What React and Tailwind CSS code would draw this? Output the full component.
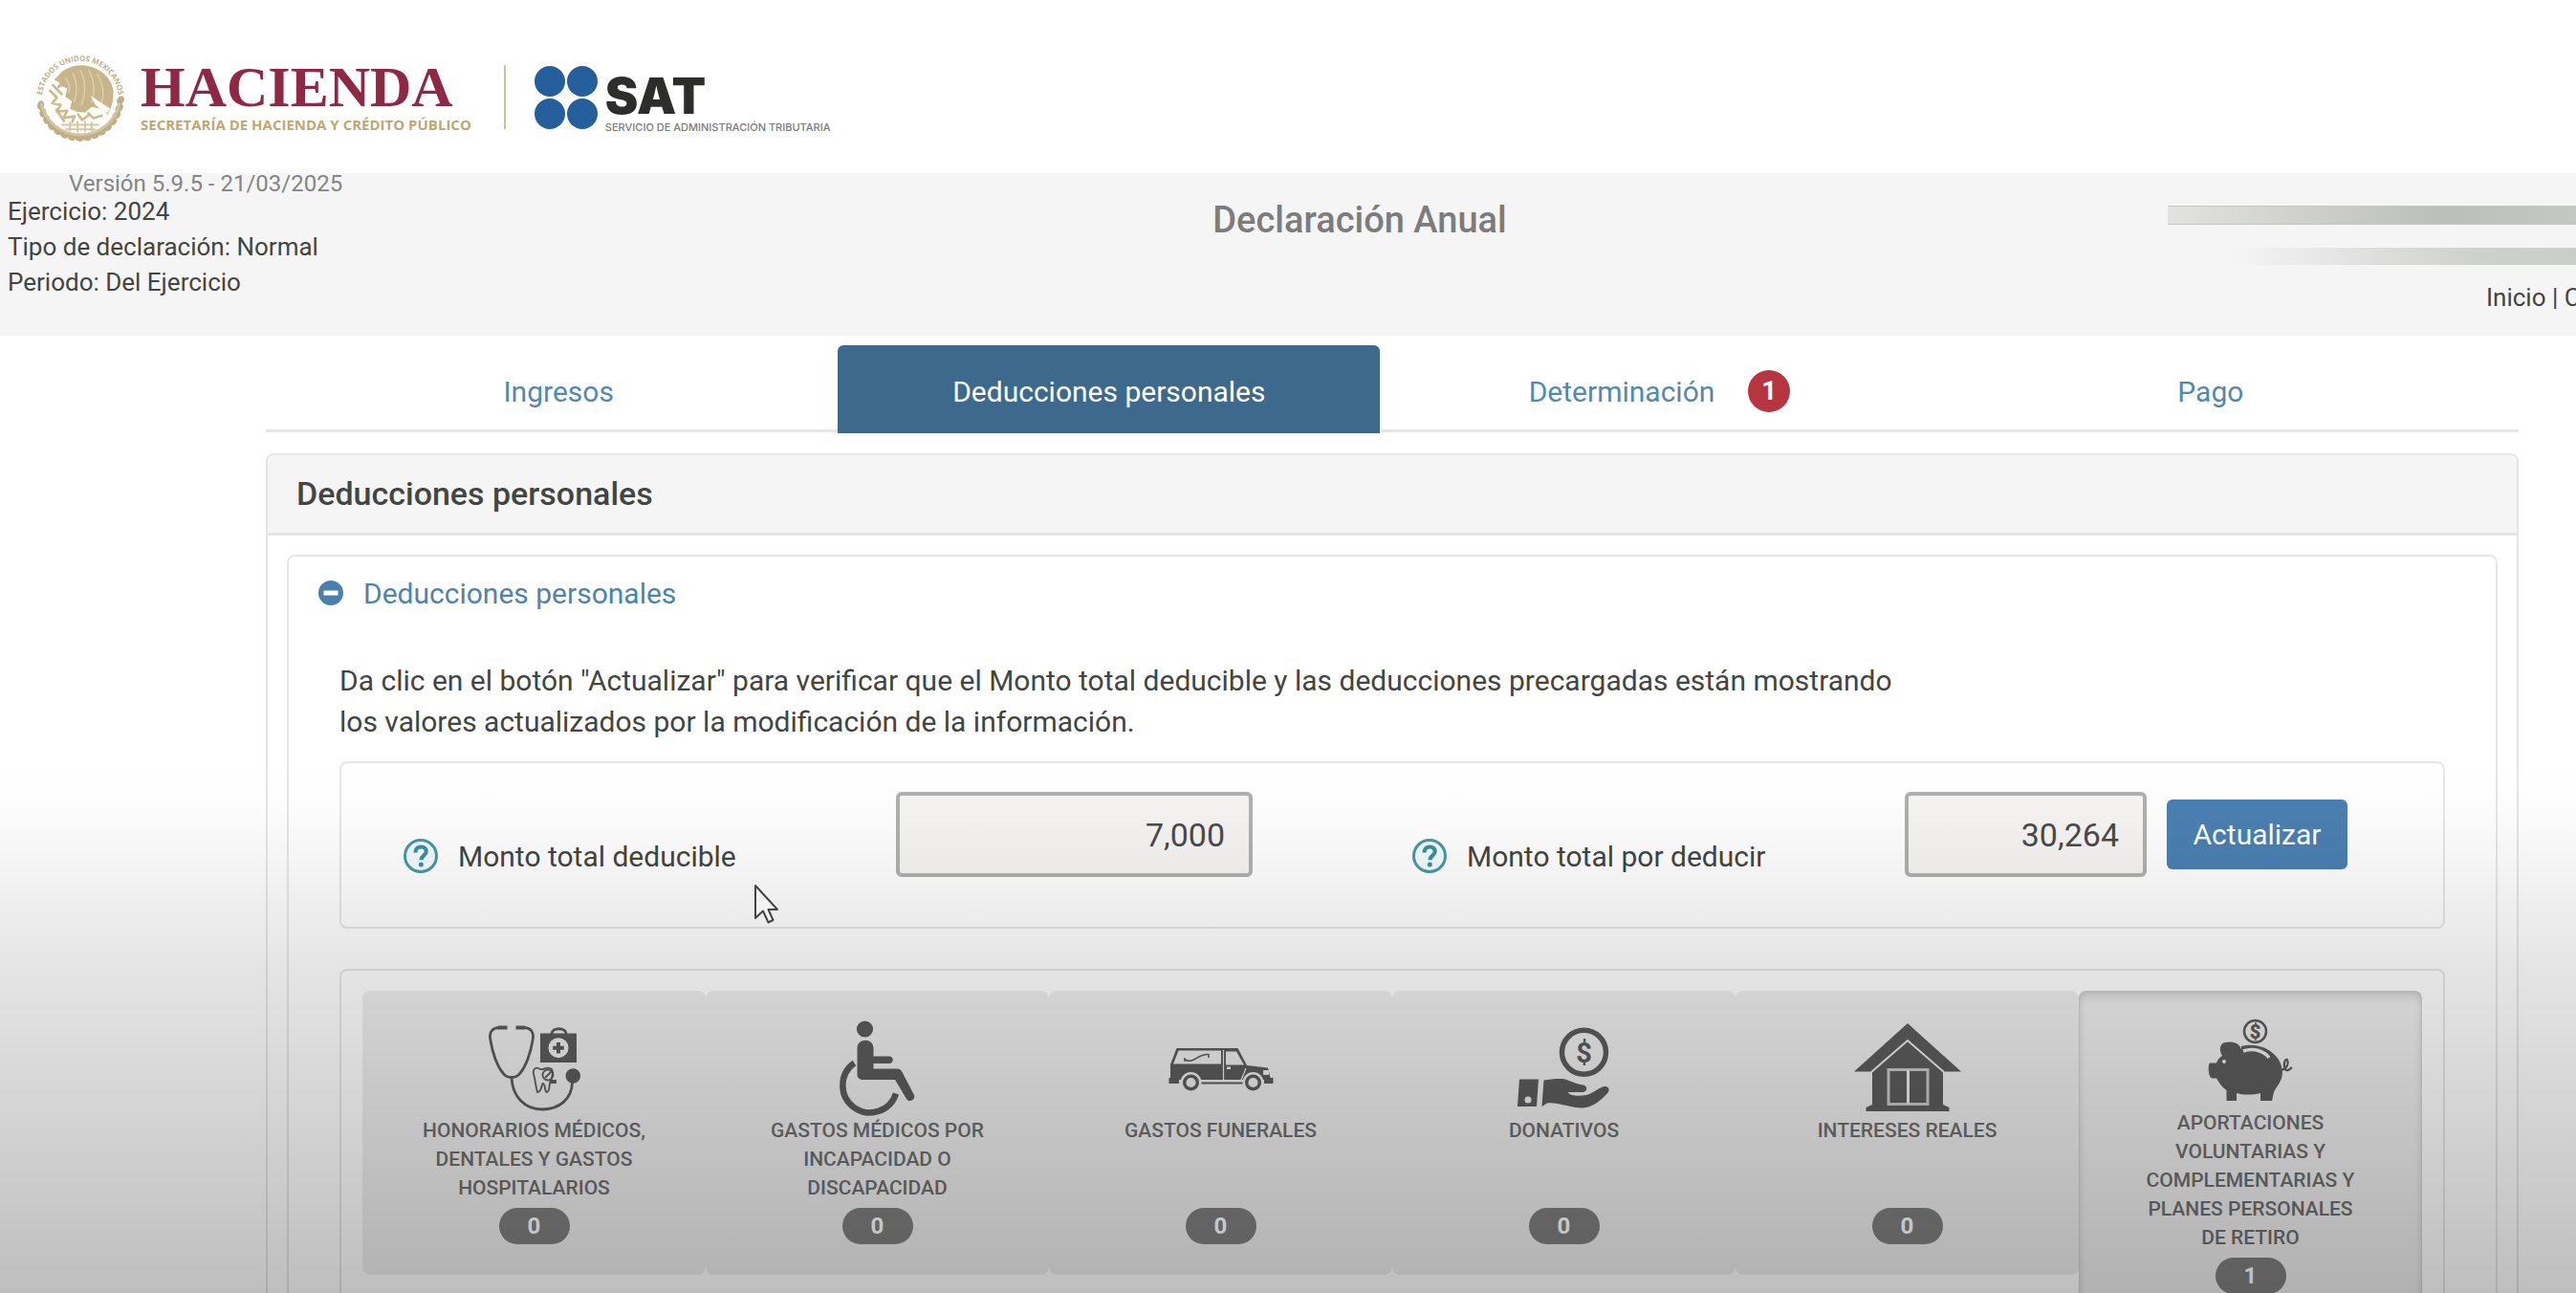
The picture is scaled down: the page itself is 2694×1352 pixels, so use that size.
import React from "react";

const INK = "#5c5c5c";
const PAPER = "#eeeeee";

function Seal() {
  const leaves = [];
  for (let a = 4; a <= 176; a += 11) leaves.push(a);
  return (
    <svg viewBox="0 0 100 100" className="size-[98px] shrink-0" aria-hidden="true">
      <defs>
        <path id="ring" d="M9 52A41 41 0 0 1 91 52" />
      </defs>
      <text fontFamily="Open Sans, sans-serif" fontWeight="700" fontSize="8" fill="#c2ae84">
        <textPath href="#ring" startOffset="50%" textAnchor="middle">
          ESTADOS UNIDOS MEXICANOS
        </textPath>
      </text>
      <g fill="#c2ae84">
        {leaves.map((a) => (
          <ellipse key={a} cx="93" cy="50" rx="3.6" ry="5" transform={`rotate(${a} 50 50) rotate(24 93 50)`} />
        ))}
      </g>
      <path d="M8 56A43 43 0 0 0 92 56" fill="none" stroke="#d3c4a1" strokeWidth="3" />
      <circle cx="50" cy="50" r="37" fill="#fdfcf9" />
      <path
        d="M26 27C33 18 45 14 56 16 70 18 82 27 85 41 86 51 84 60 79 68L72 62 62 60 55 66 46 65 39 62 41 54 34 49 36 40 30 38 24 42 28 34 22 31Z"
        fill="#c8b58c"
      />
      <path
        d="M42 24C47 34 47 46 43 55M50 21C56 32 56 46 51 58M59 21C65 31 66 44 62 55M68 25C74 35 76 45 73 55M34 29C38 34 39 40 38 45"
        fill="none"
        stroke="#e0d4b8"
        strokeWidth="1.2"
      />
      <path d="M61 48L82 62 78 67 66 58Z" fill="#fbf9f4" />
      <path
        d="M17 42L25 50 20 56 29 58 25 65 36 64 32 72 44 70 41 77M20 36L31 47M58 66L64 72 74 69M24 62L33 76M47 67L52 74 60 68"
        fill="none"
        stroke="#cbb98f"
        strokeWidth="2.6"
        strokeLinejoin="round"
      />
      <path d="M30 79H70M34 84H66M39 76V86M47 75V87M55 75V87M62 76V86" stroke="#d5c7a6" strokeWidth="2" />
    </svg>
  );
}

function SatDots() {
  return (
    <svg viewBox="0 0 66 66" className="size-[66px] shrink-0" fill="#245f9c" aria-hidden="true">
      <circle cx="16" cy="16" r="16" />
      <circle cx="50" cy="16" r="16" />
      <circle cx="16" cy="50" r="16" />
      <circle cx="50" cy="50" r="16" />
    </svg>
  );
}

function HelpIcon() {
  return (
    <svg viewBox="0 0 38 38" className="size-[38px] shrink-0" aria-hidden="true">
      <circle cx="19" cy="19" r="16.5" fill="#f2fbfd" stroke="#4798aa" strokeWidth="3" />
      <path
        d="M13.5 15.5C13.5 11.5 16 9.5 19.3 9.5 22.6 9.5 24.7 11.6 24.7 14.4 24.7 18.5 19.4 18.8 19.4 23.3"
        fill="none"
        stroke="#3c8fa3"
        strokeWidth="4.2"
      />
      <circle cx="19.3" cy="28" r="2.5" fill="#3c8fa3" />
    </svg>
  );
}

function MinusIcon() {
  return (
    <svg viewBox="0 0 26 26" className="size-[26px] shrink-0" aria-hidden="true">
      <circle cx="13" cy="13" r="13" fill="#4a80ae" />
      <rect x="5.5" y="10.5" width="15" height="5" fill="#fff" />
    </svg>
  );
}

function MedicalIcon() {
  return (
    <>
      <g fill="none" stroke={INK} strokeWidth="2.8">
        <path d="M24 7.5C14 7.5 12.5 14 14 21 16 34 21 48 27 55 31 61 41 61 45 55 51 48 56 34 58 21 59.5 14 58 7.5 48 7.5" />
        <path d="M36 60C37 80 50 93 68 93S99 82 99.5 65" />
        <path d="M78 14C78 7 93 7 93 14" />
      </g>
      <path d="M22 5.5H31.5V9.5H22ZM40.5 5.5H50V9.5H40.5Z" fill={INK} />
      <rect x="66" y="13.5" width="38" height="30.5" fill={INK} />
      <circle cx="85" cy="28.7" r="10.5" fill={PAPER} />
      <path d="M85 23V34.5M79.2 28.7H90.8" stroke={INK} strokeWidth="4" />
      <circle cx="100.3" cy="58" r="7.8" fill={INK} />
      <g fill="none" stroke={INK} strokeWidth="1.8">
        <path d="M63 75C61 68 61 63 59.5 58 57 50 62 48 66 51 70 52 73 47 78 51 81 55 77 61 76 66 75 70 76 74 73 75 70 75 72 67 69 66 67 66 68 75 63 75Z" />
        <circle cx="74" cy="57" r="5.5" />
        <path d="M71 60L78 53M77 63H82V65H76" />
      </g>
    </>
  );
}

function WheelchairIcon() {
  return (
    <>
      <circle cx="46.5" cy="9" r="8.6" fill={INK} />
      <path
        d="M38.5 29C38.5 18 55.5 18 55.5 29V37.5H72C77 37.5 77 45 72 45H55.5V50.5H80C83 50.5 84.5 52 85.5 54L98 78C100 83 92.5 86.5 90 82L78 62H45C41 62 38.5 60 38.5 56Z"
        fill={INK}
      />
      <path d="M35.500 44.500A28.500 28.500 0 1 0 79 76.500" fill="none" stroke={INK} strokeWidth="6.500" />
    </>
  );
}

function HearseIcon() {
  return (
    <>
      <path d="M13.5 29H77.5L87 47 109 49.5 112 62H7V46Z" fill={INK} />
      <path d="M15.5 31.5H60V45.5H10Z" fill={PAPER} />
      <path d="M65 32.5H76L84 46.5 80 46.5H65Z" fill={PAPER} />
      <path d="M22 41C32 46 36 34 47 35.5M47 35V39M22 39V43" fill="none" stroke={INK} strokeWidth="1.5" />
      <path d="M62.5 31V65M65 65H80L86 50" fill="none" stroke={PAPER} strokeWidth="1.2" />
      <rect x="66" y="48.5" width="4" height="2.5" fill={PAPER} />
      <rect x="104" y="52" width="6" height="5" rx="1" fill={PAPER} />
      <path d="M5.5 60H16V66H5.5ZM105 60H114.5V66H105Z" fill={INK} />
      <path d="M36 65.5H86" stroke={INK} strokeWidth="2" />
      <circle cx="28.5" cy="65" r="11" fill={PAPER} />
      <circle cx="93.5" cy="65" r="11" fill={PAPER} />
      <circle cx="28.5" cy="65" r="6.8" fill={PAPER} stroke={INK} strokeWidth="3.4" />
      <circle cx="93.5" cy="65" r="6.8" fill={PAPER} stroke={INK} strokeWidth="3.4" />
    </>
  );
}

function DonationIcon() {
  return (
    <>
      <circle cx="80.5" cy="33.3" r="23" fill="none" stroke={INK} strokeWidth="5.5" />
      <text x="80.5" y="44" textAnchor="middle" fontFamily="Roboto, sans-serif" fontWeight="700" fontSize="29" fill={INK}>
        $
      </text>
      <path d="M13 61.5H33L31 90H11Z" fill={INK} />
      <circle cx="22" cy="83" r="3.5" fill={PAPER} />
      <path
        d="M38.5 62.5C46 61.5 54 60.5 61 61.5 68 64 74 67 80 67.5 85 69 84 75 79 75H64C65 79 76 79.5 83 78 90 76 94 72 100 69.5 105 68 108 71 106 75 99 83 91 90 80 91.5 68 92 52 85 42 86.5L36.5 90Z"
        fill={INK}
      />
    </>
  );
}

function HouseIcon() {
  return (
    <>
      <path d="M60 3L116 53.5H97V88L103.5 91V95H16.5V91L23 88V53.5H4Z" fill={INK} />
      <path d="M22 54L60 21 98 54" fill="none" stroke={PAPER} strokeWidth="2" />
      <rect x="40" y="51.5" width="41" height="36" fill="none" stroke="#c9c9c9" strokeWidth="3" />
      <path d="M60.5 52V87" stroke={PAPER} strokeWidth="3" />
    </>
  );
}

function PiggyIcon() {
  return (
    <>
      <circle cx="64.5" cy="11.5" r="11.5" fill="none" stroke={INK} strokeWidth="2.5" />
      <text x="64.5" y="18.5" textAnchor="middle" fontFamily="Roboto, sans-serif" fontWeight="900" fontSize="20" fill={INK}>
        $
      </text>
      <path
        d="M50 27C70 22 92 34 93 54 93 64 86 70 84 75L82 84H70V76C62 78 52 78 45 76V84H34.5V73C29 69 27 65 24 60.5H19C15 58 15 46 17 44.5H24C25 41 27 39 30 37 26 30 28 24 33 23 42 21 48 24 50 30Z"
        fill={INK}
      />
      <path d="M52 32C64 28 75 33 79 39" fill="none" stroke={PAPER} strokeWidth="3.5" />
      <circle cx="32" cy="43" r="2" fill={PAPER} />
      <path d="M92 52C98 50 100 45 98 41 94 40 94 50 97 52 99 53 101 51 103 49" fill="none" stroke={INK} strokeWidth="2.2" />
    </>
  );
}

const cards = [
  { label: "Honorarios médicos, dentales y gastos hospitalarios", count: 0, Icon: MedicalIcon },
  { label: "Gastos médicos por incapacidad o discapacidad", count: 0, Icon: WheelchairIcon },
  { label: "Gastos funerales", count: 0, Icon: HearseIcon },
  { label: "Donativos", count: 0, Icon: DonationIcon },
  { label: "Intereses reales", count: 0, Icon: HouseIcon },
  { label: "Aportaciones voluntarias y complementarias y planes personales de retiro", count: 1, Icon: PiggyIcon, active: true },
];

function Card({ label, count, Icon, active }) {
  return (
    <button
      type="button"
      className={
        active
          ? "flex flex-col items-center rounded-lg bg-[#eeeeee] px-16 pt-[31px] pb-8 shadow-[inset_0_6px_10px_rgba(0,0,0,0.12),inset_0_0_4px_rgba(0,0,0,0.12)]"
          : "flex flex-col items-center self-start rounded-lg bg-[#eeeeee] px-12 pt-[31px] pb-8"
      }
    >
      <svg viewBox={active ? "0 0 120 92" : "0 0 120 100"} className={active ? "h-[92px] w-[120px] shrink-0 overflow-visible" : "h-[100px] w-[120px] shrink-0"} aria-hidden="true">
        <Icon />
      </svg>
      <span className="min-h-[90px] text-[21px] leading-[30px] font-medium text-[#6e6e6e] uppercase">{label}</span>
      <span className="mt-1.5 flex h-[38px] w-[74px] items-center justify-center rounded-full bg-[#7f7f7f] text-2xl font-bold text-white">
        {count}
      </span>
    </button>
  );
}

function Amount({ id, label, value, width, gap }) {
  return (
    <div className={gap}>
      <label htmlFor={id} className="flex h-11 w-[516px] items-center gap-5">
        <HelpIcon />
        {label}
      </label>
      <input
        id={id}
        readOnly
        defaultValue={value}
        className={`${width} h-[89px] rounded-md border-4 border-[#b0b0af] bg-[#f6f5f3] pr-[25px] text-right text-[34px] text-[#4a4a4a]`}
      />
    </div>
  );
}

const tab = "flex h-[88px] flex-1 items-center justify-center pt-2 text-[#5289b0]";

export default function App() {
  return (
    <div className="relative h-screen overflow-hidden bg-white font-[Roboto,sans-serif] text-[30px] text-[#424540]">
      <header className="flex h-[181px] items-start pt-[53px] pl-[35px]">
        <Seal />
        <div className="ml-3.5 flex flex-col pt-2">
          <span className="font-['Liberation_Serif',serif] text-[60px] leading-[60px] font-bold text-[#8e2845]">HACIENDA</span>
          <span className="font-['Open_Sans',sans-serif] text-[15px] leading-[18px] font-bold text-[#c0a672]">
            SECRETARÍA DE HACIENDA Y CRÉDITO PÚBLICO
          </span>
        </div>
        <div className="mt-[15px] ml-[34px] h-[67px] w-0.5 bg-[#d1c094]" />
        <div className="mt-4 ml-[30px]">
          <SatDots />
        </div>
        <div className="ml-2 flex flex-col pt-6">
          <span className="font-[Inter,sans-serif] text-[52px] leading-[48px] font-black text-[#2d2d2b]">SAT</span>
          <span className="font-[Inter,sans-serif] text-[11px] leading-4 font-medium text-[#7a7a7a]">SERVICIO DE ADMINISTRACIÓN TRIBUTARIA</span>
        </div>
      </header>

      <section className="grid h-[170px] w-[calc(100%+150px)] grid-cols-3 bg-[#f5f5f5] text-[26px]">
        <div className="pl-2">
          <p className="pl-16 text-2xl leading-[22px] text-[#858585]">Versión 5.9.5 - 21/03/2025</p>
          <p className="leading-[37px]">Ejercicio: 2024</p>
          <p className="leading-[37px]">Tipo de declaración: Normal</p>
          <p className="leading-[37px]">Periodo: Del Ejercicio</p>
        </div>
        <h1 className="pt-6 text-center text-[38px] leading-[50px] font-medium text-[#7c7c7c]">Declaración Anual</h1>
        <div className="flex flex-col items-end pt-[34px]">
          <div className="h-5 w-[577px] border-y border-[#c6c8c5] bg-linear-to-r from-[#e2e3e1] via-[#bcbebb] to-[#d0d2cf]" />
          <div className="mt-6 h-[18px] w-[514px] bg-linear-to-r from-[#f5f5f5] via-[#cfd1ce] to-[#c6c8c5]" />
          <nav className="mt-4 w-[244px] leading-[37px]">
            <a href="#inicio">Inicio</a> | <a href="#c">C</a>
          </nav>
        </div>
      </section>

      <main className="mr-[60px] ml-[278px]">
        <nav className="flex border-b-[3px] border-[#e6e6e6] pt-2.5 pr-[34px] pl-[18px]">
          <a href="#ingresos" className={tab}>Ingresos</a>
          <a href="#deducciones" className="mx-1 -mb-1 flex h-[92px] w-[567px] items-center justify-center rounded-t-md bg-[#3d698d] pt-1 text-white">
            Deducciones personales
          </a>
          <a href="#determinacion" className={tab}>
            Determinación
            <span className="ml-[35px] flex size-11 items-center justify-center rounded-full bg-[#b73540] text-[28px] font-bold text-white">1</span>
          </a>
          <a href="#pago" className={tab}>Pago</a>
        </nav>

        <section className="mt-[22px] rounded-lg border-2 border-[#e6e6e6]">
          <h2 className="rounded-t-md border-b-[3px] border-[#e6e6e6] bg-[#f5f5f5] pl-[30px] text-[34px] leading-[81px] font-medium">
            Deducciones personales
          </h2>
          <div className="p-5">
            <div className="rounded-lg border-2 border-[#e6e6e6] pt-4 pb-10">
              <button type="button" className="ml-[31px] flex h-11 items-center gap-[21px] text-[#4d84ae]">
                <MinusIcon />
                Deducciones personales
              </button>
              <div className="mx-[53px] mt-12">
                <p className="max-w-[1660px] leading-[43px]">
                  Da clic en el botón "Actualizar" para verificar que el Monto total deducible y las deducciones precargadas están mostrando los
                  valores actualizados por la modificación de la información.
                </p>

                <div className="mt-5 flex rounded-lg border-2 border-[#e6e6e6] pt-[30px] pb-[52px] pl-16">
                  <Amount id="deducible" label="Monto total deducible" value="7,000" width="w-[373px]" gap="flex items-end" />
                  <Amount id="por-deducir" label="Monto total por deducir" value="30,264" width="w-[253px]" gap="ml-[166px] flex items-end" />
                  <button type="button" className="mt-2 ml-[21px] h-[73px] w-[189px] rounded-md bg-[#4a80b2] text-white">
                    Actualizar
                  </button>
                </div>

                <div className="mt-[42px] grid grid-cols-6 rounded-lg border-2 border-[#e6e6e6] px-[22px] py-[21px]">
                  {cards.map((c) => (
                    <Card key={c.label} {...c} />
                  ))}
                </div>
              </div>
            </div>
          </div>
        </section>
      </main>

      <div className="pointer-events-none absolute inset-x-0 bottom-0 h-[552px] bg-[linear-gradient(to_bottom,rgba(0,0,0,0)_0%,rgba(0,0,0,0.012)_8%,rgba(0,0,0,0.067)_27%,rgba(0,0,0,0.1)_38%,rgba(0,0,0,0.255)_100%)]" />

      <svg viewBox="0 0 26 42" className="pointer-events-none absolute top-[924px] left-[788px] h-[42px] w-[26px]" aria-hidden="true">
        <path d="M2 2V36L10 28.5 15.5 40.5 20.5 38 15.5 27H25Z" fill="#f4f4f4" stroke="#444" strokeWidth="2" strokeLinejoin="round" />
      </svg>
    </div>
  );
}
